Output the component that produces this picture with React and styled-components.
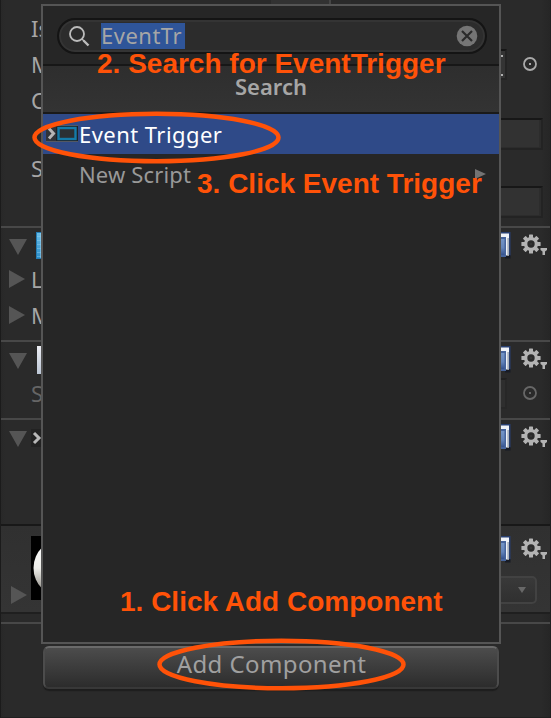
import React from 'react';
import styled, { createGlobalStyle, css } from 'styled-components';

const Global = createGlobalStyle`
  * { box-sizing: border-box; }
  body { margin: 0; background: #2a2a2a; overflow: hidden; }
  svg { display: block; }
`;

const Window = styled.main`
  position: relative;
  width: 551px;
  height: 718px;
  overflow: hidden;
  font: 22px/36px "Noto Sans", "Open Sans", sans-serif;
  color: #a6a6a6;
`;

const Inspector = styled.div`
  display: flex;
  flex-direction: column;
  height: 718px;
  background: linear-gradient(90deg, #282828, #2a2a2a 4px, #2a2a2a 540px, #262626);
  border-left: 1px solid #1b1b1b;
  border-right: 1px solid #202020;
  border-bottom: 1px solid #202020;
`;

const Section = styled.section`
  height: ${p => p.$h}px;
  flex: none;
  overflow: hidden;
  border-top: ${p => (p.$line ? `2px solid ${p.$line}` : '0')};
  ${p => p.$raised && css`
    background: linear-gradient(#303030, #343434);
    border-bottom: 2px solid #1f1f1f;
  `}
`;

const Row = styled.div`
  display: flex;
  align-items: ${p => p.$align || 'center'};
  height: ${p => p.$h}px;
  padding-left: ${p => p.$pl || 0}px;
  padding-right: ${p => p.$pr || 0}px;
  margin-top: ${p => p.$mt || 0}px;
  opacity: ${p => (p.$dim ? 0.48 : 1)};
`;

const Push = styled.div`
  display: flex;
  align-items: inherit;
  margin-left: auto;
`;

const Tag = styled.span`
  margin-left: ${p => p.$ml || 0}px;
  white-space: pre;
`;

const Field = styled.div`
  width: 100px;
  height: 32px;
  background: #323232;
  border: 2px solid #232323;
  border-top-color: #171717;
  box-shadow: inset -2px 0 #2c2c2c, inset 0 -1px #2c2c2c;
`;

const TopTab = styled.div`
  width: 60px;
  height: 5px;
  margin-left: 270px;
  background: #323232;
  border-right: 2px solid #454545;
`;

const ReferenceBox = styled.div`
  width: 60px;
  height: 31px;
  margin-right: 15px;
  background: #343434;
  border: 2px solid #242424;
  border-top-color: #161616;
  display: flex;
  flex-direction: column;
  justify-content: space-between;
  align-items: flex-end;
  padding: 4px 2px 2px;
`;

const Dot = styled.i`
  width: 2px;
  height: 2px;
  background: #b0b0b0;
`;

const ShaderSelect = styled.div`
  width: 120px;
  height: 28px;
  display: flex;
  align-items: center;
  justify-content: flex-end;
  padding-right: 9px;
  border: 2px solid #424242;
  border-radius: 5px;
  background: linear-gradient(#393939, #303030);
`;

const BlueGrid = styled.div`
  width: 24px;
  height: 27px;
  margin-left: 9px;
  margin-top: -1px;
  border: 1px solid #247db4;
  background:
    repeating-linear-gradient(90deg, transparent 0 3px, #9bd2ee88 3px 4px),
    repeating-linear-gradient(transparent 0 3px, #9bd2ee66 3px 4px),
    linear-gradient(#68bce7, #2c8dc8);
`;

const PaleIcon = styled.div`
  width: 24px;
  height: 28px;
  margin-left: 10px;
  background: linear-gradient(#eceef3, #bcc6d5);
`;

const Popup = styled.div`
  position: absolute;
  left: 41px;
  top: 4px;
  width: 460px;
  height: 640px;
  border: 2px solid #555;
  background: #262626;
  display: flex;
  flex-direction: column;
`;

const SearchBar = styled.div`
  height: 58px;
  flex: none;
  padding: 12px 12px 0 14px;
`;

const SearchField = styled.div`
  display: flex;
  align-items: center;
  height: 36px;
  padding: 0 7px 0 9px;
  border: 2px solid #141414;
  border-radius: 18px;
  background: #2c2c2c;
  box-shadow: inset 0 0 0 2px #343434;
  svg:last-child { margin-left: auto; }
`;

const Selection = styled.span`
  width: 84px;
  height: 26px;
  margin: -1px 0 0 11px;
  line-height: 24px;
  background: #2f5599;
  letter-spacing: 0.5px;
  white-space: nowrap;
`;

const Heading = styled.h1`
  height: 50px;
  margin: 0;
  flex: none;
  border-top: 2px solid #171717;
  border-bottom: 2px solid #1a1a1a;
  background: linear-gradient(#2e2e2e, #333);
  font-size: 22px;
  font-weight: 600;
  line-height: 41px;
  text-align: center;
`;

const Option = styled.div`
  display: flex;
  align-items: center;
  height: 40px;
  flex: none;
  padding: 0 13px 0 ${p => (p.$selected ? 2 : 36)}px;
  background: ${p => (p.$selected ? '#2f4a88' : 'transparent')};
  color: ${p => (p.$selected ? '#fff' : '#999')};
  letter-spacing: ${p => p.$track}px;
  svg:last-child { margin-left: auto; }
`;

const AddButton = styled.button`
  flex: none;
  width: 456px;
  height: 43px;
  margin: 22px 0 0 42px;
  padding: 0 0 8px 1px;
  border: 2px solid #3d3d3d;
  border-top-color: #6a6a6a;
  border-left-color: #4c4c4c;
  border-right-color: #4c4c4c;
  border-bottom-color: #383838;
  border-radius: 6px;
  background: linear-gradient(#4c4c4c, #2c2c2c);
  box-shadow: 0 2px 1px #1d1d1d;
  color: #a0a0a0;
  font: 24px/31px "Noto Sans", sans-serif;
  letter-spacing: 0.4px;
`;

const Note = styled.strong`
  position: absolute;
  left: ${p => p.$x}px;
  top: ${p => p.$y}px;
  color: #ff5208;
  font: bold 28px/32px "Liberation Sans", Arial, sans-serif;
  white-space: nowrap;
`;

const Overlay = styled.svg`
  position: absolute;
  inset: 0;
  pointer-events: none;
`;

const Down = () => <svg width="18" height="18"><path d="M0 2H18L9 18Z" fill="#555" /></svg>;
const Right = () => <svg width="16" height="18"><path d="M0 0V18L16 9Z" fill="#555" /></svg>;

const Target = () => (
  <svg width="16" height="16" fill="none" stroke="#aaa">
    <circle cx="8" cy="8" r="6" strokeWidth="1.8" />
    <rect x="7" y="7" width="2" height="2" fill="#aaa" stroke="none" />
  </svg>
);

const Book = () => (
  <svg width="28" height="28">
    <defs>
      <linearGradient id="cover" x2="0" y2="1">
        <stop stopColor="#7394c6" />
        <stop offset=".55" stopColor="#6384ba" />
        <stop offset="1" stopColor="#35528d" />
      </linearGradient>
    </defs>
    <path d="M0 1H27.5V25H0Z" fill="#283f70" />
    <path d="M22 24H27.5V27.5H22Z" fill="#171b25" />
    <path d="M0 2.5H26V24.5H22V6H0Z" fill="#f0f3f8" />
    <path d="M24.3 7H26V24.5H24.3Z" fill="#a9b1bd" />
    <path d="M0 6H23V26H0Z" fill="#45639c" />
    <path d="M0 8H21.5V24H0Z" fill="url(#cover)" />
  </svg>
);

const Gear = () => (
  <svg width="27" height="24">
    <g fill="#b3b3b3">
      {[0, 45, 90, 135].map(a => (
        <rect key={a} x="8" y="0.4" width="4" height="19.2" rx="0.6" transform={`rotate(${a} 10 10)`} />
      ))}
      <circle cx="10" cy="10" r="7" />
      <path d="M19.5 14H26V16L24 17.5V21H21.5V17.5L19.5 16Z" />
    </g>
    <circle cx="10" cy="10" r="3.7" fill="#2b2b2b" />
    <rect x="9" y="9" width="2" height="2" fill="#353535" />
  </svg>
);

const Magnifier = () => (
  <svg width="22" height="22" fill="none" stroke="#bcbcbc">
    <circle cx="9" cy="9" r="7" strokeWidth="1.8" />
    <path d="M14 14L16 16" strokeWidth="1.5" />
    <path d="M15.5 15.5L20.5 20.5" strokeWidth="2.4" />
  </svg>
);

const Clear = () => (
  <svg width="22" height="22">
    <circle cx="11" cy="11" r="10.3" fill="#757575" />
    <path d="M6 6L16 16M16 6L6 16" stroke="#2b2b2b" strokeWidth="2.2" />
  </svg>
);

const Chevron = () => (
  <svg width="11" height="18">
    <rect width="11" height="18" fill="#222" />
    <path d="M3 4L8 9L3 14" fill="none" stroke="#b8b8b8" strokeWidth="3" />
  </svg>
);

const EventIcon = () => (
  <svg width="34" height="18">
    <path d="M1 0.5H33M1 16.5H33" stroke="#535863" />
    <rect x="1" y="1" width="10" height="15" fill="#303338" />
    <path d="M4 3.5L8.5 8.5L4 13.5" fill="none" stroke="#b5b5b5" strokeWidth="3" />
    <rect x="11" y="1" width="22" height="15" fill="#1e2226" />
    <rect x="13.5" y="3" width="17" height="11" fill="#2b3034" stroke="#147ba9" strokeWidth="2.4" />
  </svg>
);

const Sphere = () => (
  <svg width="64" height="64">
    <defs>
      <linearGradient id="ball" x2="0" y2="1">
        <stop stopColor="#fff" />
        <stop offset=".5" stopColor="#eeeeea" />
        <stop offset="1" stopColor="#77736b" />
      </linearGradient>
    </defs>
    <rect width="64" height="64" fill="#000" />
    <circle cx="32" cy="32" r="29.5" fill="url(#ball)" />
  </svg>
);

const Tools = styled(Push)`
  align-items: flex-start;
  padding-right: 2px;
`;

const HeaderTools = () => (
  <Tools>
    <Book />
    <Row $h={28} $mt={3} $pl={10} $align="flex-start"><Gear /></Row>
  </Tools>
);

export default function App() {
  return (
    <Window>
      <Global />
      <Inspector>
        <Section $h={226}>
          <TopTab />
          <Row $h={36} $mt={5} $pl={30}><Tag>Is</Tag></Row>
          <Row $h={36} $pl={30} $pr={12}>
            <Tag>M</Tag>
            <Push><ReferenceBox><Dot /><Dot /></ReferenceBox><Target /></Push>
          </Row>
          <Row $h={36} $pl={30}><Tag>C</Tag></Row>
          <Row $h={32} $pr={7}><Push><Field /></Push></Row>
          <Row $h={36} $pl={30}><Tag>S</Tag></Row>
          <Row $h={32} $pr={7}><Push><Field /></Push></Row>
        </Section>
        <Section $h={114} $line="#484848">
          <Row $h={28} $mt={4} $pl={8}><Down /><BlueGrid /><HeaderTools /></Row>
          <Row $h={36} $mt={1} $pl={8}><Right /><Tag $ml={6}>L</Tag></Row>
          <Row $h={36} $pl={8}><Right /><Tag $ml={6}>M</Tag></Row>
        </Section>
        <Section $h={78} $line="#484848">
          <Row $h={28} $mt={4} $pl={8}><Down /><PaleIcon /><HeaderTools /></Row>
          <Row $h={36} $mt={1} $pl={30} $pr={12} $dim>
            <Tag>S</Tag>
            <Push><ReferenceBox /><Target /></Push>
          </Row>
        </Section>
        <Section $h={106} $line="#484848">
          <Row $h={28} $mt={4} $pl={8}><Down /><Tag $ml={4}><Chevron /></Tag><HeaderTools /></Row>
        </Section>
        <Section $h={90} $line="#181818" $raised>
          <Row $h={76} $mt={10} $pl={10} $align="flex-start">
            <Row $h={18} $mt={50}><Right /></Row>
            <Row $h={64} $pl={4}><Sphere /></Row>
            <Push>
              <div>
                <Row $h={28}><HeaderTools /></Row>
                <Row $h={28} $mt={12} $pr={13}><Push><ShaderSelect>
                  <svg width="8" height="7"><path d="M0 0H8L4 6Z" fill="#686868" /></svg>
                </ShaderSelect></Push></Row>
              </div>
            </Push>
          </Row>
        </Section>
        <Section $h={8} />
        <Section $h={2} $line="#484848" />
        <AddButton>Add Component</AddButton>
      </Inspector>

      <Popup>
        <SearchBar>
          <SearchField>
            <Magnifier />
            <Selection>EventTr</Selection>
            <Clear />
          </SearchField>
        </SearchBar>
        <Heading>Search</Heading>
        <Option $selected $track={0.45}><EventIcon /><span>Event Trigger</span></Option>
        <Option $track={0.15}>
          <span>New Script</span>
          <svg width="11" height="12"><path d="M0 1V11L11 6Z" fill="#737373" /></svg>
        </Option>
      </Popup>

      <Note $x={97} $y={48}>2. Search for EventTrigger</Note>
      <Note $x={197} $y={168}>3. Click Event Trigger</Note>
      <Note $x={120} $y={586}>1. Click Add Component</Note>
      <Overlay width="551" height="718" fill="none" stroke="#ff5208">
        <ellipse cx="156.5" cy="137.5" rx="122" ry="23.7" strokeWidth="4.5" />
        <ellipse cx="281.5" cy="664.5" rx="122" ry="23.7" strokeWidth="4.5" />
      </Overlay>
    </Window>
  );
}
